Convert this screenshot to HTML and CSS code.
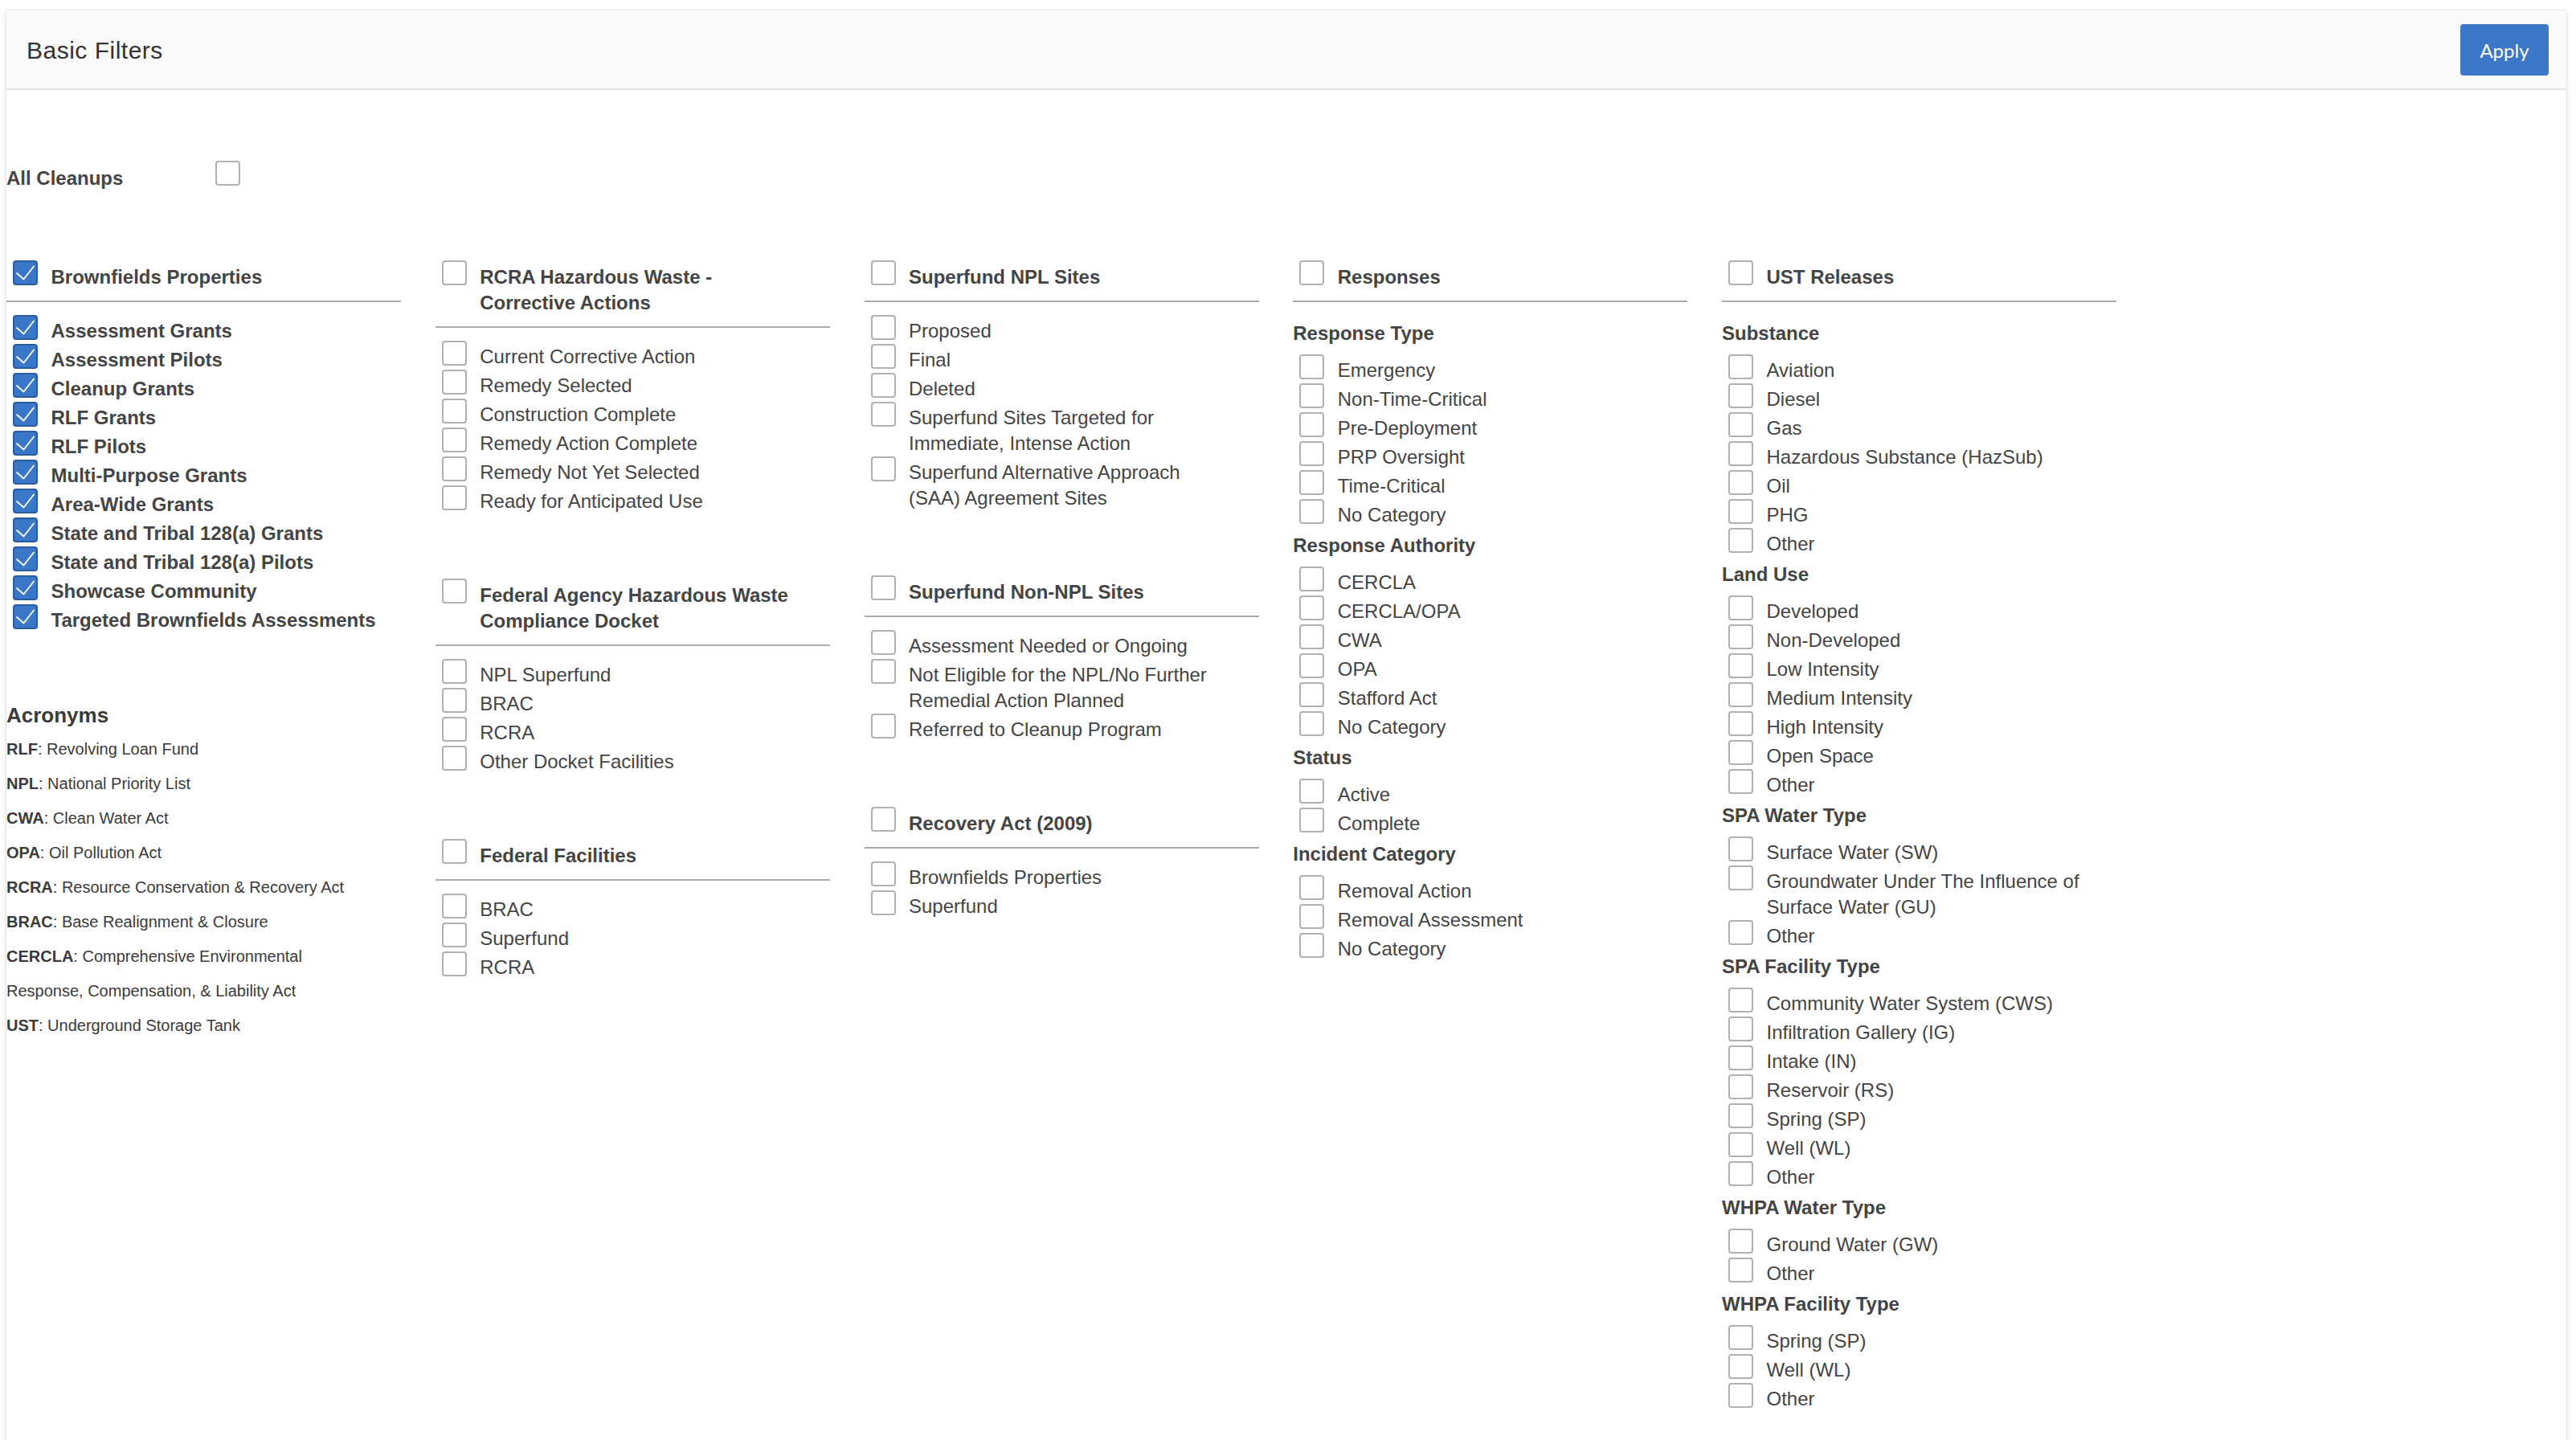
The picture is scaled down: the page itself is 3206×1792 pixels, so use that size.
FILE: index.html
```html
<!DOCTYPE html>
<html lang="en">
<head>
<meta charset="utf-8">
<title>Basic Filters</title>
<link rel="stylesheet" href="styles.css">
</head>
<body>
<div class="panel">
  <div class="panel-head">
    <h1 class="title">Basic Filters</h1>
    <button class="apply" type="button">Apply</button>
  </div>
  <div class="panel-body">
    <div class="all-row">
      <span class="all-label">All Cleanups</span>
      <span class="cb"></span>
    </div>
    <div class="cols">
      <!-- Column 1 -->
      <div class="col">
        <div class="group">
          <div class="ghead"><span class="cb on"><svg viewBox="0 0 27 27"><polyline points="3,14 11.5,21.5 24,5.5"/></svg></span><span class="gtitle">Brownfields Properties</span></div>
          <div class="item b"><span class="cb on"><svg viewBox="0 0 27 27"><polyline points="3,14 11.5,21.5 24,5.5"/></svg></span><span class="lbl">Assessment Grants</span></div>
          <div class="item b"><span class="cb on"><svg viewBox="0 0 27 27"><polyline points="3,14 11.5,21.5 24,5.5"/></svg></span><span class="lbl">Assessment Pilots</span></div>
          <div class="item b"><span class="cb on"><svg viewBox="0 0 27 27"><polyline points="3,14 11.5,21.5 24,5.5"/></svg></span><span class="lbl">Cleanup Grants</span></div>
          <div class="item b"><span class="cb on"><svg viewBox="0 0 27 27"><polyline points="3,14 11.5,21.5 24,5.5"/></svg></span><span class="lbl">RLF Grants</span></div>
          <div class="item b"><span class="cb on"><svg viewBox="0 0 27 27"><polyline points="3,14 11.5,21.5 24,5.5"/></svg></span><span class="lbl">RLF Pilots</span></div>
          <div class="item b"><span class="cb on"><svg viewBox="0 0 27 27"><polyline points="3,14 11.5,21.5 24,5.5"/></svg></span><span class="lbl">Multi-Purpose Grants</span></div>
          <div class="item b"><span class="cb on"><svg viewBox="0 0 27 27"><polyline points="3,14 11.5,21.5 24,5.5"/></svg></span><span class="lbl">Area-Wide Grants</span></div>
          <div class="item b"><span class="cb on"><svg viewBox="0 0 27 27"><polyline points="3,14 11.5,21.5 24,5.5"/></svg></span><span class="lbl">State and Tribal 128(a) Grants</span></div>
          <div class="item b"><span class="cb on"><svg viewBox="0 0 27 27"><polyline points="3,14 11.5,21.5 24,5.5"/></svg></span><span class="lbl">State and Tribal 128(a) Pilots</span></div>
          <div class="item b"><span class="cb on"><svg viewBox="0 0 27 27"><polyline points="3,14 11.5,21.5 24,5.5"/></svg></span><span class="lbl">Showcase Community</span></div>
          <div class="item b"><span class="cb on"><svg viewBox="0 0 27 27"><polyline points="3,14 11.5,21.5 24,5.5"/></svg></span><span class="lbl">Targeted Brownfields Assessments</span></div>
        </div>
        <div class="acro">
          <h3 class="acro-title">Acronyms</h3>
          <p><b>RLF</b>: Revolving Loan Fund</p>
          <p><b>NPL</b>: National Priority List</p>
          <p><b>CWA</b>: Clean Water Act</p>
          <p><b>OPA</b>: Oil Pollution Act</p>
          <p><b>RCRA</b>: Resource Conservation &amp; Recovery Act</p>
          <p><b>BRAC</b>: Base Realignment &amp; Closure</p>
          <p><b>CERCLA</b>: Comprehensive Environmental<br>Response, Compensation, &amp; Liability Act</p>
          <p><b>UST</b>: Underground Storage Tank</p>
        </div>
      </div>

      <!-- Column 2 -->
      <div class="col">
        <div class="group">
          <div class="ghead"><span class="cb"></span><span class="gtitle">RCRA Hazardous Waste - Corrective Actions</span></div>
          <div class="item"><span class="cb"></span><span class="lbl">Current Corrective Action</span></div>
          <div class="item"><span class="cb"></span><span class="lbl">Remedy Selected</span></div>
          <div class="item"><span class="cb"></span><span class="lbl">Construction Complete</span></div>
          <div class="item"><span class="cb"></span><span class="lbl">Remedy Action Complete</span></div>
          <div class="item"><span class="cb"></span><span class="lbl">Remedy Not Yet Selected</span></div>
          <div class="item"><span class="cb"></span><span class="lbl">Ready for Anticipated Use</span></div>
        </div>
        <div class="group">
          <div class="ghead"><span class="cb"></span><span class="gtitle">Federal Agency Hazardous Waste Compliance Docket</span></div>
          <div class="item"><span class="cb"></span><span class="lbl">NPL Superfund</span></div>
          <div class="item"><span class="cb"></span><span class="lbl">BRAC</span></div>
          <div class="item"><span class="cb"></span><span class="lbl">RCRA</span></div>
          <div class="item"><span class="cb"></span><span class="lbl">Other Docket Facilities</span></div>
        </div>
        <div class="group">
          <div class="ghead"><span class="cb"></span><span class="gtitle">Federal Facilities</span></div>
          <div class="item"><span class="cb"></span><span class="lbl">BRAC</span></div>
          <div class="item"><span class="cb"></span><span class="lbl">Superfund</span></div>
          <div class="item"><span class="cb"></span><span class="lbl">RCRA</span></div>
        </div>
      </div>

      <!-- Column 3 -->
      <div class="col">
        <div class="group">
          <div class="ghead"><span class="cb"></span><span class="gtitle">Superfund NPL Sites</span></div>
          <div class="item"><span class="cb"></span><span class="lbl">Proposed</span></div>
          <div class="item"><span class="cb"></span><span class="lbl">Final</span></div>
          <div class="item"><span class="cb"></span><span class="lbl">Deleted</span></div>
          <div class="item"><span class="cb"></span><span class="lbl">Superfund Sites Targeted for Immediate, Intense Action</span></div>
          <div class="item"><span class="cb"></span><span class="lbl">Superfund Alternative Approach (SAA) Agreement Sites</span></div>
        </div>
        <div class="group">
          <div class="ghead"><span class="cb"></span><span class="gtitle">Superfund Non-NPL Sites</span></div>
          <div class="item"><span class="cb"></span><span class="lbl">Assessment Needed or Ongoing</span></div>
          <div class="item"><span class="cb"></span><span class="lbl">Not Eligible for the NPL/No Further Remedial Action Planned</span></div>
          <div class="item"><span class="cb"></span><span class="lbl">Referred to Cleanup Program</span></div>
        </div>
        <div class="group">
          <div class="ghead"><span class="cb"></span><span class="gtitle">Recovery Act (2009)</span></div>
          <div class="item"><span class="cb"></span><span class="lbl">Brownfields Properties</span></div>
          <div class="item"><span class="cb"></span><span class="lbl">Superfund</span></div>
        </div>
      </div>

      <!-- Column 4 -->
      <div class="col">
        <div class="group">
          <div class="ghead"><span class="cb"></span><span class="gtitle">Responses</span></div>
          <div class="sub">Response Type</div>
          <div class="item"><span class="cb"></span><span class="lbl">Emergency</span></div>
          <div class="item"><span class="cb"></span><span class="lbl">Non-Time-Critical</span></div>
          <div class="item"><span class="cb"></span><span class="lbl">Pre-Deployment</span></div>
          <div class="item"><span class="cb"></span><span class="lbl">PRP Oversight</span></div>
          <div class="item"><span class="cb"></span><span class="lbl">Time-Critical</span></div>
          <div class="item"><span class="cb"></span><span class="lbl">No Category</span></div>
          <div class="sub">Response Authority</div>
          <div class="item"><span class="cb"></span><span class="lbl">CERCLA</span></div>
          <div class="item"><span class="cb"></span><span class="lbl">CERCLA/OPA</span></div>
          <div class="item"><span class="cb"></span><span class="lbl">CWA</span></div>
          <div class="item"><span class="cb"></span><span class="lbl">OPA</span></div>
          <div class="item"><span class="cb"></span><span class="lbl">Stafford Act</span></div>
          <div class="item"><span class="cb"></span><span class="lbl">No Category</span></div>
          <div class="sub">Status</div>
          <div class="item"><span class="cb"></span><span class="lbl">Active</span></div>
          <div class="item"><span class="cb"></span><span class="lbl">Complete</span></div>
          <div class="sub">Incident Category</div>
          <div class="item"><span class="cb"></span><span class="lbl">Removal Action</span></div>
          <div class="item"><span class="cb"></span><span class="lbl">Removal Assessment</span></div>
          <div class="item"><span class="cb"></span><span class="lbl">No Category</span></div>
        </div>
      </div>

      <!-- Column 5 -->
      <div class="col">
        <div class="group">
          <div class="ghead"><span class="cb"></span><span class="gtitle">UST Releases</span></div>
          <div class="sub">Substance</div>
          <div class="item"><span class="cb"></span><span class="lbl">Aviation</span></div>
          <div class="item"><span class="cb"></span><span class="lbl">Diesel</span></div>
          <div class="item"><span class="cb"></span><span class="lbl">Gas</span></div>
          <div class="item"><span class="cb"></span><span class="lbl">Hazardous Substance (HazSub)</span></div>
          <div class="item"><span class="cb"></span><span class="lbl">Oil</span></div>
          <div class="item"><span class="cb"></span><span class="lbl">PHG</span></div>
          <div class="item"><span class="cb"></span><span class="lbl">Other</span></div>
          <div class="sub">Land Use</div>
          <div class="item"><span class="cb"></span><span class="lbl">Developed</span></div>
          <div class="item"><span class="cb"></span><span class="lbl">Non-Developed</span></div>
          <div class="item"><span class="cb"></span><span class="lbl">Low Intensity</span></div>
          <div class="item"><span class="cb"></span><span class="lbl">Medium Intensity</span></div>
          <div class="item"><span class="cb"></span><span class="lbl">High Intensity</span></div>
          <div class="item"><span class="cb"></span><span class="lbl">Open Space</span></div>
          <div class="item"><span class="cb"></span><span class="lbl">Other</span></div>
          <div class="sub">SPA Water Type</div>
          <div class="item"><span class="cb"></span><span class="lbl">Surface Water (SW)</span></div>
          <div class="item"><span class="cb"></span><span class="lbl">Groundwater Under The Influence of Surface Water (GU)</span></div>
          <div class="item"><span class="cb"></span><span class="lbl">Other</span></div>
          <div class="sub">SPA Facility Type</div>
          <div class="item"><span class="cb"></span><span class="lbl">Community Water System (CWS)</span></div>
          <div class="item"><span class="cb"></span><span class="lbl">Infiltration Gallery (IG)</span></div>
          <div class="item"><span class="cb"></span><span class="lbl">Intake (IN)</span></div>
          <div class="item"><span class="cb"></span><span class="lbl">Reservoir (RS)</span></div>
          <div class="item"><span class="cb"></span><span class="lbl">Spring (SP)</span></div>
          <div class="item"><span class="cb"></span><span class="lbl">Well (WL)</span></div>
          <div class="item"><span class="cb"></span><span class="lbl">Other</span></div>
          <div class="sub">WHPA Water Type</div>
          <div class="item"><span class="cb"></span><span class="lbl">Ground Water (GW)</span></div>
          <div class="item"><span class="cb"></span><span class="lbl">Other</span></div>
          <div class="sub">WHPA Facility Type</div>
          <div class="item"><span class="cb"></span><span class="lbl">Spring (SP)</span></div>
          <div class="item"><span class="cb"></span><span class="lbl">Well (WL)</span></div>
          <div class="item"><span class="cb"></span><span class="lbl">Other</span></div>
        </div>
      </div>
    </div>
  </div>
</div>
</body>
</html>
```

FILE: styles.css
```css
html, body {
  margin: 0;
  padding: 0;
  background: #ffffff;
}

body {
  font-family: "Liberation Sans", Arial, Helvetica, sans-serif;
  color: #444444;
  font-size: 24px;
}

.panel {
  margin: 12px 11px 0 7px;
  border: 1px solid #e6e6e6;
  border-radius: 4px;
  background: #ffffff;
  box-shadow: 0 3px 7px rgba(0, 0, 0, 0.09);
}

.panel-head {
  height: 97px;
  background: #fafafa;
  border-bottom: 2px solid #e2e2e2;
  border-radius: 4px 4px 0 0;
  display: flex;
  align-items: center;
  justify-content: space-between;
  padding: 0 22px 0 25px;
}

.title {
  margin: 0;
  font-family: "Liberation Sans", Arial, Helvetica, sans-serif;
  font-weight: 400;
  font-size: 30px;
  letter-spacing: 0.5px;
  color: #333333;
  line-height: 34px;
  padding-top: 2px;
}

.apply {
  width: 110px;
  height: 64px;
  margin-top: 1px;
  background: #3d78c8;
  color: #ffffff;
  border: none;
  border-radius: 4px;
  font-family: Lato, "Open Sans", sans-serif;
  font-size: 24px;
  padding: 0;
}

.panel-body {
  padding: 88px 0 24px 0;
}

.all-row {
  display: flex;
  align-items: flex-start;
  height: 32px;
}

.all-label {
  width: 260px;
  font-weight: 700;
  font-size: 24px;
  line-height: 32px;
  padding-top: 6px;
}

.cols {
  margin-top: 92px;
  display: grid;
  grid-template-columns: repeat(5, 491px);
  column-gap: 42.75px;
  align-items: start;
}

.group {
  margin-bottom: 80px;
}

.ghead {
  display: flex;
  align-items: flex-start;
  padding-bottom: 13px;
  border-bottom: 2px solid #ababab;
  margin-bottom: 16px;
}

.gtitle {
  margin-left: 16.5px;
  max-width: 405px;
  font-weight: 700;
  font-size: 24px;
  line-height: 32px;
  padding-top: 5px;
}

.item {
  display: flex;
  align-items: flex-start;
}

.lbl {
  margin-left: 16.5px;
  max-width: 405px;
  font-size: 24px;
  line-height: 32px;
  padding-top: 4px;
}

.item.b .lbl {
  font-weight: 700;
}

.cb {
  flex: none;
  width: 31px;
  height: 31px;
  box-sizing: border-box;
  border: 2px solid #b0b0b0;
  border-radius: 4px;
  background: #ffffff;
  display: block;
}

.ghead .cb,
.item .cb {
  margin-left: 8px;
}

.cb.on {
  background: #3a77c9;
  border-color: #2b5c9f;
}

.cb svg {
  display: block;
  width: 100%;
  height: 100%;
}

.cb polyline {
  fill: none;
  stroke: #ffffff;
  stroke-width: 1.8;
  stroke-linecap: round;
  stroke-linejoin: round;
}

.sub {
  font-weight: 700;
  font-size: 24px;
  line-height: 32px;
  margin: 6px 0 10px 0;
}

.ghead + .sub {
  margin-top: 23px;
}

.acro {
  margin-top: 86px;
  color: #3a3a3a;
}

.acro-title {
  margin: 0 0 5px 0;
  font-size: 26px;
  line-height: 32px;
  font-weight: 700;
}

.acro p {
  margin: 0;
  font-size: 20px;
  line-height: 43px;
}

.acro b {
  font-weight: 700;
}
```
